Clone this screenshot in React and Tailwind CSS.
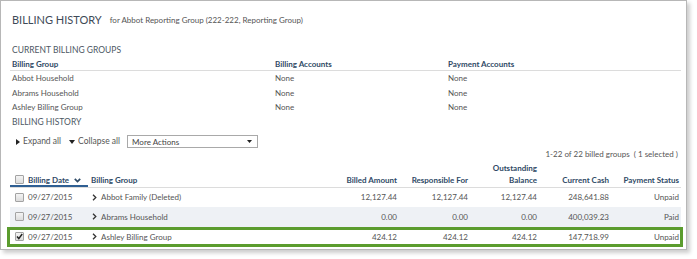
import React from "react";

const font = { fontFamily: "Lato, 'Liberation Sans', sans-serif" };

function Checkbox({ checked }) {
  return (
    <div className="relative w-[9px] h-[9px] border border-[#a3a3a3] rounded-[1px] bg-gradient-to-b from-[#f4f4f4] to-[#dcdcdc] shrink-0">
      {checked && (
        <svg viewBox="0 0 9 9" className="absolute -top-px -left-px w-[9px] h-[9px]">
          <polyline points="2,4.6 3.8,6.6 7.2,2" fill="none" stroke="#222" strokeWidth="1.5" />
        </svg>
      )}
    </div>
  );
}

function Chevron() {
  return (
    <svg viewBox="0 0 5 7" className="w-[5px] h-[7px] shrink-0">
      <polyline points="1,0.8 3.8,3.5 1,6.2" fill="none" stroke="#333" strokeWidth="1.3" />
    </svg>
  );
}

const groups = ["Abbot Household", "Abrams Household", "Ashley Billing Group"];

const history = [
  { group: "Abbot Family (Deleted)", billed: "12,127.44", resp: "12,127.44", out: "12,127.44", cash: "248,641.88", status: "Unpaid" },
  { group: "Abrams Household", billed: "0.00", resp: "0.00", out: "0.00", cash: "400,039.23", status: "Paid" },
  { group: "Ashley Billing Group", billed: "424.12", resp: "424.12", out: "424.12", cash: "147,718.99", status: "Unpaid", checked: true },
];

function HistoryCells({ row }) {
  return (
    <>
      <div className="w-[78px] flex items-center pl-[5px] gap-[4px]">
        <Checkbox checked={row.checked} />
        <span>09/27/2015</span>
      </div>
      <div className="w-[242px] flex items-center pl-[4px] gap-[4px]">
        <Chevron />
        <span>{row.group}</span>
      </div>
      <div className="w-[67px] text-right">{row.billed}</div>
      <div className="w-[71px] text-right">{row.resp}</div>
      <div className="w-[69px] text-right">{row.out}</div>
      <div className="w-[72px] text-right">{row.cash}</div>
      <div className="w-[70px] text-right">{row.status}</div>
    </>
  );
}

export default function App() {
  return (
    <div className="w-[697px] h-[259px] bg-white" style={font}>
      <div className="w-[687px] h-[250px] border border-[#b7b7b7] bg-white shadow-[3px_3px_4px_rgba(0,0,0,0.2)] pl-[9px] pr-[5px] text-[8px] text-[#555]">
        {/* title */}
        <div className="mt-[9px] h-[20px] flex items-center">
          <span className="text-[11px] text-[#3e4a57] pl-[2px]">BILLING HISTORY</span>
          <span className="ml-[8px] text-[8px] text-[#555]">for Abbot Reporting Group (222-222, Reporting Group)</span>
        </div>

        {/* current billing groups */}
        <div className="mt-[14px] h-[13px] flex items-center text-[8.5px] text-[#4d5864] pl-[2px]">
          CURRENT BILLING GROUPS
        </div>
        <div className="h-[14px] flex items-center border-b border-[#dcdcdc] font-bold text-[#2f4a66]">
          <div className="w-[263px] pl-[2px]">Billing Group</div>
          <div className="w-[173px] pl-[2px]">Billing Accounts</div>
          <div className="pl-[2px]">Payment Accounts</div>
        </div>
        {groups.map((g) => (
          <div key={g} className="h-[14.5px] flex items-center">
            <div className="w-[263px] pl-[2px]">{g}</div>
            <div className="w-[173px] pl-[2px]">None</div>
            <div className="pl-[2px]">None</div>
          </div>
        ))}

        {/* billing history */}
        <div className="h-[16px] flex items-center text-[8.5px] text-[#4d5864] pl-[2px]">
          BILLING HISTORY
        </div>
        <div className="mt-[4px] h-[14px] flex items-center pl-[6px] text-[8.5px]">
          <svg viewBox="0 0 4 6" className="w-[4px] h-[6px]">
            <polygon points="0,0 4,3 0,6" fill="#222" />
          </svg>
          <span className="ml-[3px]">Expand all</span>
          <svg viewBox="0 0 6 4" className="ml-[8px] w-[6px] h-[4px]">
            <polygon points="0,0 6,0 3,4" fill="#222" />
          </svg>
          <span className="ml-[3px]">Collapse all</span>
          <div className="ml-[7px] w-[131px] h-[13px] border border-[#a9a9a9] flex items-center justify-between pl-[4px] pr-[5px] text-[8px] text-[#444]">
            <span>More Actions</span>
            <svg viewBox="0 0 5 3" className="w-[5px] h-[3px]">
              <polygon points="0,0 5,0 2.5,3" fill="#222" />
            </svg>
          </div>
        </div>
        <div className="h-[10px] flex items-center justify-end pr-[3px]">
          1-22 of 22 billed groups&nbsp; ( 1 selected )
        </div>

        {/* history table header */}
        <div className="h-[29px] flex items-stretch border-b border-[#dcdcdc] font-bold text-[#2f4a66] leading-[12px]">
          <div className="w-[78px] flex items-end pl-[5px] pb-[1px] gap-[4px] shadow-[inset_0_-2px_0_#2f5f93]">
            <div className="mb-[2px]"><Checkbox /></div>
            <span>Billing Date</span>
            <svg viewBox="0 0 7 5" className="mb-[3px] ml-[1px] w-[7px] h-[5px]">
              <polyline points="0.8,0.8 3.5,3.6 6.2,0.8" fill="none" stroke="#2f4a66" strokeWidth="1.7" />
            </svg>
          </div>
          <div className="w-[242px] flex items-end pl-[3px] pb-[1px]">Billing Group</div>
          <div className="w-[67px] flex items-end justify-end pb-[1px]">Billed Amount</div>
          <div className="w-[71px] flex items-end justify-end pb-[1px]">Responsible For</div>
          <div className="w-[69px] flex flex-col items-end justify-end pb-[1px]">
            <span>Outstanding</span>
            <span>Balance</span>
          </div>
          <div className="w-[72px] flex items-end justify-end pb-[1px]">Current Cash</div>
          <div className="w-[70px] flex items-end justify-end pb-[1px]">Payment Status</div>
        </div>

        {/* history rows */}
        <div className="h-[19px] flex items-center">
          <HistoryCells row={history[0]} />
        </div>
        <div className="h-[20px] flex items-center bg-[#eef1f5]">
          <HistoryCells row={history[1]} />
        </div>
        <div className="h-[20px] -ml-[3px] -mr-[2px] border-[3px] border-[#5b9c2e] flex items-center">
          <HistoryCells row={history[2]} />
        </div>
      </div>
    </div>
  );
}
